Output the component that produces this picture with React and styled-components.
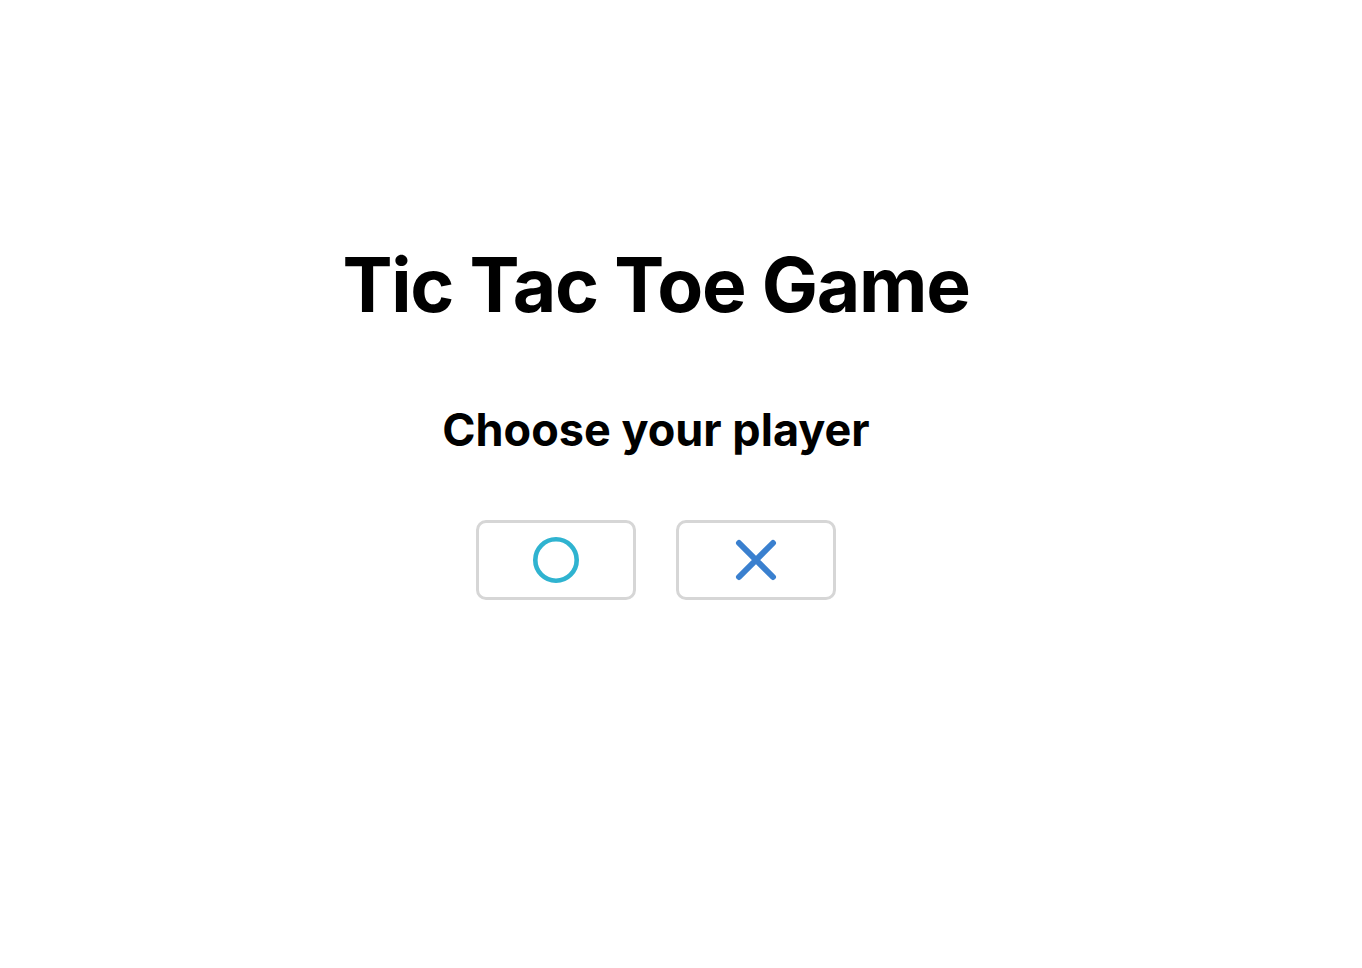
import React from 'react'
import styled, { createGlobalStyle } from 'styled-components';

const GlobalStyle = createGlobalStyle`
  body {
    margin: 0;
    background: #fff;
    font-family: Inter, "Noto Sans", sans-serif;
    color: #000;
  }
`;

const Page = styled.div`
  width: calc(100% - 50px);
  min-height: 968px;
  display: flex;
  flex-direction: column;
  align-items: center;
  padding-top: 247px;
  box-sizing: border-box;
`;

const Title = styled.h1`
  font-size: 75px;
  font-weight: 700;
  letter-spacing: -1.3px;
  line-height: 1;
  margin: 0;
`;

const Subtitle = styled.h2`
  font-size: 45px;
  font-weight: 700;
  line-height: 1;
  margin: 85px 0 0;
`;

const Choices = styled.div`
  display: flex;
  gap: 40px;
  margin-top: 68px;
`;

const ChoiceButton = styled.button`
  width: 160px;
  height: 80px;
  display: flex;
  align-items: center;
  justify-content: center;
  background: #fff;
  border: 3px solid #d6d6d6;
  border-radius: 10px;
  cursor: pointer;
  padding: 0;
`;

const CircleIcon = () => (
  <svg width="50" height="50" viewBox="0 0 50 50">
    <circle cx="25" cy="25" r="20.7" fill="none" stroke="#2fb3d0" strokeWidth="4.6" />
  </svg>
)

const CrossIcon = () => (
  <svg width="44" height="44" viewBox="0 0 44 44">
    <path d="M5 5 L39 39 M39 5 L5 39" stroke="#3a80cf" strokeWidth="6" strokeLinecap="round" />
  </svg>
)

const App = () => {
  return (
    <Page>
      <GlobalStyle />
      <Title>Tic Tac Toe Game</Title>
      <Subtitle>Choose your player</Subtitle>
      <Choices>
        <ChoiceButton><CircleIcon /></ChoiceButton>
        <ChoiceButton><CrossIcon /></ChoiceButton>
      </Choices>
    </Page>
  )
}

export default App;
